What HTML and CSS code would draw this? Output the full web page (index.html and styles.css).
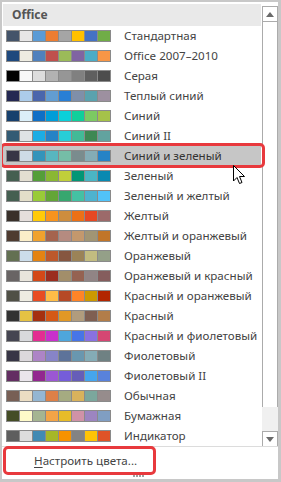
FILE: index.html
```html
<!DOCTYPE html>
<html lang="ru">
<head>
<meta charset="utf-8">
<title>Цвета</title>
<link rel="stylesheet" href="styles.css">
</head>
<body>
<div class="panel">
  <div class="list">
    <div class="content">
      <div class="header">Office</div>
      <div class="row"><div class="sw"><i style="background:#44546a"></i><i style="background:#e7e6e6"></i><i style="background:#5b9bd5"></i><i style="background:#ed7d31"></i><i style="background:#a5a5a5"></i><i style="background:#ffc000"></i><i style="background:#4472c4"></i><i style="background:#70ad47"></i></div><span>Стандартная</span></div>
      <div class="row"><div class="sw"><i style="background:#1f497d"></i><i style="background:#eeece1"></i><i style="background:#4f81bd"></i><i style="background:#c0504d"></i><i style="background:#9bbb59"></i><i style="background:#8064a2"></i><i style="background:#4bacc6"></i><i style="background:#f79646"></i></div><span>Office 2007–2010</span></div>
      <div class="row"><div class="sw"><i style="background:#000000"></i><i style="background:#f8f8f8"></i><i style="background:#dddddd"></i><i style="background:#b2b2b2"></i><i style="background:#969696"></i><i style="background:#808080"></i><i style="background:#5f5f5f"></i><i style="background:#4d4d4d"></i></div><span>Серая</span></div>
      <div class="row"><div class="sw"><i style="background:#242852"></i><i style="background:#acccea"></i><i style="background:#4a66ac"></i><i style="background:#629dd1"></i><i style="background:#297fd5"></i><i style="background:#7f8fa9"></i><i style="background:#5aa2ae"></i><i style="background:#9d90a0"></i></div><span>Теплый синий</span></div>
      <div class="row"><div class="sw"><i style="background:#17406d"></i><i style="background:#dbeff9"></i><i style="background:#0f6fc6"></i><i style="background:#009dd9"></i><i style="background:#0bd0d9"></i><i style="background:#10cf9b"></i><i style="background:#7cca62"></i><i style="background:#a5c249"></i></div><span>Синий</span></div>
      <div class="row"><div class="sw"><i style="background:#335b74"></i><i style="background:#dfe3e5"></i><i style="background:#1cade4"></i><i style="background:#2683c6"></i><i style="background:#27ced7"></i><i style="background:#42ba97"></i><i style="background:#3e8853"></i><i style="background:#62a39f"></i></div><span>Синий II</span></div>
      <div class="row selected"><div class="sw"><i style="background:#373545"></i><i style="background:#cedbe6"></i><i style="background:#3494ba"></i><i style="background:#58b6c0"></i><i style="background:#75bda7"></i><i style="background:#7a8c8e"></i><i style="background:#84acb6"></i><i style="background:#2683c6"></i></div><span>Синий и зеленый</span></div>
      <div class="row"><div class="sw"><i style="background:#455f51"></i><i style="background:#e3ded1"></i><i style="background:#549e39"></i><i style="background:#8ab833"></i><i style="background:#c0cf3a"></i><i style="background:#029676"></i><i style="background:#4ab5c4"></i><i style="background:#0989b1"></i></div><span>Зеленый</span></div>
      <div class="row"><div class="sw"><i style="background:#455f51"></i><i style="background:#e3dec9"></i><i style="background:#99cb38"></i><i style="background:#63a537"></i><i style="background:#37a76f"></i><i style="background:#44c1a3"></i><i style="background:#4eb3cf"></i><i style="background:#51c3f9"></i></div><span>Зеленый и желтый</span></div>
      <div class="row"><div class="sw"><i style="background:#39302a"></i><i style="background:#e5dedb"></i><i style="background:#ffca08"></i><i style="background:#f8931d"></i><i style="background:#ce8d3e"></i><i style="background:#ec7016"></i><i style="background:#e64823"></i><i style="background:#9c6a6a"></i></div><span>Желтый</span></div>
      <div class="row"><div class="sw"><i style="background:#4e3b30"></i><i style="background:#fbeec9"></i><i style="background:#f0a22e"></i><i style="background:#a5644e"></i><i style="background:#b58b80"></i><i style="background:#c3986d"></i><i style="background:#a19574"></i><i style="background:#c17529"></i></div><span>Желтый и оранжевый</span></div>
      <div class="row"><div class="sw"><i style="background:#637052"></i><i style="background:#ccddea"></i><i style="background:#e48312"></i><i style="background:#bd582c"></i><i style="background:#865640"></i><i style="background:#9b8357"></i><i style="background:#c2bc80"></i><i style="background:#94a088"></i></div><span>Оранжевый</span></div>
      <div class="row"><div class="sw"><i style="background:#696464"></i><i style="background:#e9e5dc"></i><i style="background:#d34817"></i><i style="background:#9b2d1f"></i><i style="background:#a28e6a"></i><i style="background:#956251"></i><i style="background:#918485"></i><i style="background:#855d5d"></i></div><span>Оранжевый и красный</span></div>
      <div class="row"><div class="sw"><i style="background:#505046"></i><i style="background:#eeece1"></i><i style="background:#e84c22"></i><i style="background:#ffbd47"></i><i style="background:#b64926"></i><i style="background:#ff8427"></i><i style="background:#cc9900"></i><i style="background:#b22600"></i></div><span>Красный и оранжевый</span></div>
      <div class="row"><div class="sw"><i style="background:#323232"></i><i style="background:#e5c243"></i><i style="background:#a5300f"></i><i style="background:#d55816"></i><i style="background:#e19825"></i><i style="background:#b19c7d"></i><i style="background:#7f5f52"></i><i style="background:#b27d49"></i></div><span>Красный</span></div>
      <div class="row"><div class="sw"><i style="background:#454551"></i><i style="background:#d8d9dc"></i><i style="background:#e32d91"></i><i style="background:#c830cc"></i><i style="background:#4ea6dc"></i><i style="background:#4775e7"></i><i style="background:#8971e1"></i><i style="background:#d54773"></i></div><span>Красный и фиолетовый</span></div>
      <div class="row"><div class="sw"><i style="background:#373545"></i><i style="background:#dcd8dc"></i><i style="background:#ad84c6"></i><i style="background:#8784c7"></i><i style="background:#5d739a"></i><i style="background:#6997af"></i><i style="background:#84acb6"></i><i style="background:#6f8183"></i></div><span>Фиолетовый</span></div>
      <div class="row"><div class="sw"><i style="background:#632e62"></i><i style="background:#eae5eb"></i><i style="background:#92278f"></i><i style="background:#9b57d3"></i><i style="background:#755dd9"></i><i style="background:#665eb8"></i><i style="background:#45a5ed"></i><i style="background:#5982db"></i></div><span>Фиолетовый II</span></div>
      <div class="row"><div class="sw"><i style="background:#775f55"></i><i style="background:#ebddc3"></i><i style="background:#94b6d2"></i><i style="background:#dd8047"></i><i style="background:#a5ab81"></i><i style="background:#d8b25c"></i><i style="background:#7ba79d"></i><i style="background:#968c8c"></i></div><span>Обычная</span></div>
      <div class="row"><div class="sw"><i style="background:#444d26"></i><i style="background:#fefac9"></i><i style="background:#a5b592"></i><i style="background:#f3a447"></i><i style="background:#e7bc29"></i><i style="background:#d092a7"></i><i style="background:#9c85c0"></i><i style="background:#809ec2"></i></div><span>Бумажная</span></div>
      <div class="row"><div class="sw"><i style="background:#5e5e5e"></i><i style="background:#dddddd"></i><i style="background:#418ab3"></i><i style="background:#a6b727"></i><i style="background:#f69200"></i><i style="background:#838383"></i><i style="background:#fec306"></i><i style="background:#df5327"></i></div><span>Индикатор</span></div>
    </div>
    <div class="scrollbar">
      <div class="sbtn"><svg width="8" height="5" viewBox="0 0 8 5"><path d="M0 5 L4 0 L8 5 Z" fill="#6a6a6a"/></svg></div>
      <div class="track"><div class="thumb"></div></div>
      <div class="sbtn"><svg width="8" height="5" viewBox="0 0 8 5"><path d="M0 0 L8 0 L4 5 Z" fill="#6a6a6a"/></svg></div>
    </div>
  </div>
  <div class="footer">
    <div class="action"><u>Н</u>астроить цвета...</div>
    <div class="grip"><i></i><i></i><i></i><i></i></div>
  </div>
  <div class="mark mark-row"></div>
  <div class="mark mark-action"></div>
  <svg class="cursor" width="13" height="20" viewBox="0 0 13 20"><path d="M0.5 0.5 L0.5 16 L4 12.5 L6.5 18.5 L9 17.5 L6.5 11.5 L11.5 11.5 Z" fill="#fff" stroke="#000" stroke-width="1" stroke-linejoin="miter"/></svg>
</div>
</body>
</html>
```
FILE: styles.css
```css
* { box-sizing: border-box; }
html, body { margin: 0; padding: 0; background: #fff; }
body { font-family: "Noto Sans", "Open Sans", sans-serif; font-size: 11.6px; color: #444; }

.panel {
  position: relative;
  width: 281px;
  height: 482px;
  border-style: solid;
  border-color: #c8c8c8;
  border-width: 2px 3px 3px 2px;
  display: flex;
  flex-direction: column;
  background: #fff;
  overflow: hidden;
}

.list {
  display: flex;
  padding: 2px 0 0 1px;
  gap: 1px;
  height: 444px;
}

.content { width: 258px; display: flex; flex-direction: column; }

.header {
  height: 22px;
  background: #e9e9e9;
  font-weight: bold;
  color: #555;
  padding-left: 9px;
  line-height: 22px;
  font-size: 12px;
}

.row {
  height: 20px;
  display: flex;
  align-items: center;
  padding-left: 3px;
}
.row span { margin-left: 13px; white-space: nowrap; line-height: 20px; }
.row.selected { background: #c6c6c6; }
.row.selected span { color: #333; }

.sw {
  display: flex;
  gap: 1px;
  padding: 1px;
  background: #8a8a8a;
}
.sw i { display: block; width: 12px; height: 10px; }

.scrollbar {
  width: 16px;
  display: flex;
  flex-direction: column;
  padding-top: 2px;
  height: 443px;
}
.sbtn {
  height: 16px;
  border: 1px solid #ababab;
  display: flex;
  align-items: center;
  justify-content: center;
  background: #fff;
}
.track { flex: 1; background: #f0f0f0; display: flex; flex-direction: column; }
.thumb {
  height: 385px;
  background: #fff;
  border-left: 1px solid #ababab;
  border-right: 1px solid #ababab;
}

.footer {
  border-top: 1px solid #dcdcdc;
  flex: 1;
  display: flex;
  flex-direction: column;
}
.action {
  height: 28px;
  line-height: 27px;
  padding-left: 32px;
  color: #444;
}
.action u { text-decoration-thickness: 1px; text-underline-offset: 2px; }
.grip { display: flex; justify-content: center; gap: 1px; margin-left: -4px; }
.grip i { display: block; width: 2px; height: 2px; background: #a0a0a0; }

.mark {
  position: absolute;
  border: 3px solid #e8393d;
  border-radius: 5px;
}
.mark-row { left: -2px; top: 141px; width: 265px; height: 25px; }
.mark-action { left: 1px; top: 444px; width: 153px; height: 29px; }

.cursor { position: absolute; left: 231px; top: 163px; }
```
